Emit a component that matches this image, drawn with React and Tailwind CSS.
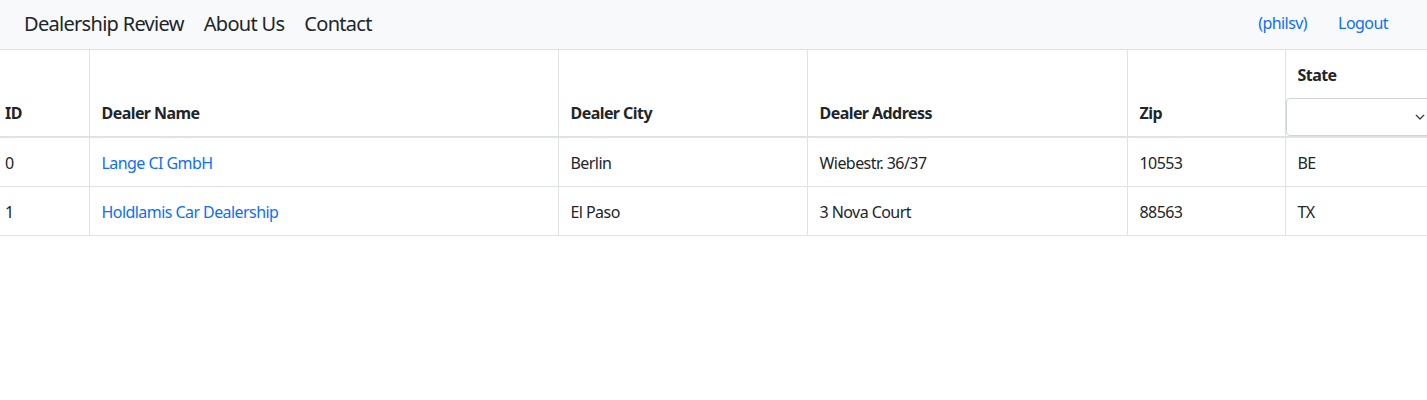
import React from 'react'

const dealers = [
  { id: 0, name: 'Lange CI GmbH', city: 'Berlin', address: 'Wiebestr. 36/37', zip: '10553', state: 'BE' },
  { id: 1, name: 'Holdlamis Car Dealership', city: 'El Paso', address: '3 Nova Court', zip: '88563', state: 'TX' },
]

function Header() {
  return (
    <nav className="h-[50px] bg-[#f8f9fa] border-b border-[#dee2e6] flex items-center justify-between pl-6 pr-[39px] pb-[2px]">
      <div className="flex items-center text-[20px] text-[#212529] tracking-[-0.7px]">
        <a href="#" className="mr-5">Dealership Review</a>
        <a href="#" className="mr-5">About Us</a>
        <a href="#">Contact</a>
      </div>
      <div className="flex items-center gap-[31px] text-[16px] text-[#0d6efd] pb-[2px]">
        <a href="#">(philsv)</a>
        <a href="#">Logout</a>
      </div>
    </nav>
  )
}

export default function App() {
  return (
    <div className="min-h-[400px] bg-white overflow-hidden text-[16px] text-[#212529] tracking-[-0.035em]" style={{ fontFamily: '"Segoe UI", "Noto Sans", sans-serif' }}>
      <Header />
      <table className="w-[1450px] border-collapse table-fixed">
        <colgroup>
          <col className="w-[89px]" />
          <col className="w-[469px]" />
          <col className="w-[249px]" />
          <col className="w-[320px]" />
          <col className="w-[158px]" />
          <col className="w-[165px]" />
        </colgroup>
        <thead>
          <tr className="border-b-2 border-[#dee2e6] align-bottom font-bold text-left leading-6">
            <th className="pl-[5px] pr-3 pt-3 pb-[11px] border-r border-[#dee2e6]">ID</th>
            <th className="px-3 pt-3 pb-[11px] border-r border-[#dee2e6]">Dealer Name</th>
            <th className="px-3 pt-3 pb-[11px] border-r border-[#dee2e6]">Dealer City</th>
            <th className="px-3 pt-3 pb-[11px] border-r border-[#dee2e6]">Dealer Address</th>
            <th className="px-3 pt-3 pb-[11px] border-r border-[#dee2e6]">Zip</th>
            <th className="pt-[13px] px-0 pb-0">
              <div className="pl-3">State</div>
              <div className="mt-[11px] h-[38px] w-[150px] border border-[#ced4da] rounded-[4px] flex items-center justify-end pr-[10px] font-normal">
                <svg width="10" height="7" viewBox="0 0 16 11" fill="none" stroke="#343a40" strokeWidth="2" strokeLinecap="round" strokeLinejoin="round">
                  <path d="M2 2l6 6 6-6" />
                </svg>
              </div>
            </th>
          </tr>
        </thead>
        <tbody>
          {dealers.map((d) => (
            <tr key={d.id} className="border-b border-[#dee2e6] leading-6">
              <td className="pl-[5px] pr-3 pt-[13px] pb-[11px] border-r border-[#dee2e6]">{d.id}</td>
              <td className="px-3 pt-[13px] pb-[11px] border-r border-[#dee2e6]">
                <a href="#" className="text-[#0d6efd]">{d.name}</a>
              </td>
              <td className="px-3 pt-[13px] pb-[11px] border-r border-[#dee2e6]">{d.city}</td>
              <td className="px-3 pt-[13px] pb-[11px] border-r border-[#dee2e6]">{d.address}</td>
              <td className="px-3 pt-[13px] pb-[11px] border-r border-[#dee2e6]">{d.zip}</td>
              <td className="px-3 pt-[13px] pb-[11px]">{d.state}</td>
            </tr>
          ))}
        </tbody>
      </table>
    </div>
  )
}
